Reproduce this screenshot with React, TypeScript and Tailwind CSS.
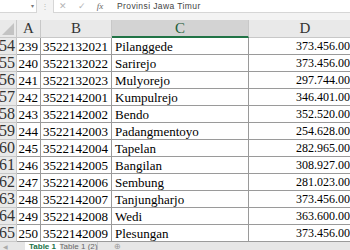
import React from 'react';

const rows = [
    ['54', '239', '3522132021', 'Pilanggede', '373.456.000'],
    ['55', '240', '3522132022', 'Sarirejo', '373.456.000'],
    ['56', '241', '3522132023', 'Mulyorejo', '297.744.000'],
    ['57', '242', '3522142001', 'Kumpulrejo', '346.401.000'],
    ['58', '243', '3522142002', 'Bendo', '352.520.000'],
    ['59', '244', '3522142003', 'Padangmentoyo', '254.628.000'],
    ['60', '245', '3522142004', 'Tapelan', '282.965.000'],
    ['61', '246', '3522142005', 'Bangilan', '308.927.000'],
    ['62', '247', '3522142006', 'Sembung', '281.023.000'],
    ['63', '248', '3522142007', 'Tanjungharjo', '373.456.000'],
    ['64', '249', '3522142008', 'Wedi', '363.600.000'],
    ['65', '250', '3522142009', 'Plesungan', '373.456.000'],
];

const serif = { fontFamily: '"Liberation Serif", "Times New Roman", serif' };

export default function App() {
    return (
        <div className="w-[350px] h-[250px] overflow-hidden bg-[#f3f3f3] flex flex-col" style={{ fontFamily: '"Liberation Sans", Arial, sans-serif' }}>
            {/* Formula bar */}
            <div className="h-[13px] flex items-stretch shrink-0">
                <div className="w-[37px] shrink-0 bg-white border-r border-b border-[#d6d6d6] flex items-center justify-end pr-[2px]">
                    <span className="text-[6px] text-[#777] leading-none">▾</span>
                </div>
                <div className="w-[16px] shrink-0 flex items-center justify-center text-[8px] text-[#bbb] leading-none">⋮</div>
                <div className="flex-1 bg-white border-l border-b border-[#d6d6d6] flex items-center">
                    <span className="w-[18px] text-center text-[9px] text-[#b5b5b5] leading-none">✕</span>
                    <span className="w-[20px] text-center text-[9px] text-[#b5b5b5] leading-none">✓</span>
                    <span className="w-[16px] text-center text-[9px] italic text-[#666] leading-none" style={serif}>fx</span>
                    <span className="ml-[9px] text-[8.5px] tracking-[0.4px] text-[#444] leading-none">Provinsi Jawa Timur</span>
                </div>
            </div>
            <div className="h-[7px] shrink-0" />

            {/* Column headers */}
            <div className="h-[18px] w-[361px] flex shrink-0 bg-[#e9e9e9] text-[15px] text-[#333] leading-none" style={serif}>
                <div className="w-[17px] shrink-0 border-r border-b border-[#c8c8c8] relative overflow-hidden">
                    <svg className="absolute right-[2px] bottom-[2px]" width="12" height="12" viewBox="0 0 12 12">
                        <polygon points="12,0 12,12 0,12" fill="#c3c3c3" />
                    </svg>
                </div>
                <div className="w-[24px] shrink-0 border-r border-b border-[#c8c8c8] flex items-center justify-center">A</div>
                <div className="w-[71px] shrink-0 border-r border-b border-[#c8c8c8] flex items-center justify-center">B</div>
                <div className="w-[137px] shrink-0 bg-[#d3d3d3] border-r border-[#c8c8c8] border-b-2 border-b-[#217346] flex items-center justify-center text-[#1e5e3a]">C</div>
                <div className="w-[112px] shrink-0 border-b border-[#c8c8c8] flex items-center justify-center">D</div>
            </div>

            {/* Rows */}
            <div className="flex flex-col w-[361px] bg-white shrink-0" style={serif}>
                {rows.map((r) => (
                    <div key={r[0]} className="h-[17px] w-[361px] flex text-[13px] text-black leading-none">
                        <div className="w-[17px] shrink-0 bg-[#e9e9e9] border-r border-b border-[#c8c8c8] flex items-center justify-end overflow-hidden text-[16px] text-[#333] pr-[1px]">
                            <span className="whitespace-nowrap">{r[0]}</span>
                        </div>
                        <div className="w-[24px] shrink-0 border-r border-b border-[#9a9a9a] flex items-center justify-end pr-[2px]">{r[1]}</div>
                        <div className="w-[71px] shrink-0 border-r border-b border-[#9a9a9a] flex items-center pl-[2px]">{r[2]}</div>
                        <div className="w-[137px] shrink-0 border-r border-b border-[#9a9a9a] flex items-center pl-[3px] whitespace-nowrap">{r[3]}</div>
                        <div className="w-[112px] shrink-0 border-b border-[#9a9a9a] flex items-center justify-end pr-[5px] text-[12px]">{r[4]}</div>
                    </div>
                ))}
            </div>

            {/* Sheet tabs */}
            <div className="flex-1 flex items-stretch bg-[#e6e6e6] text-[8px] leading-none whitespace-nowrap">
                <div className="w-[25px] flex items-center pl-[3px] text-[#aaa] text-[6px]">◀</div>
                <div className="w-[35px] bg-white flex items-start pt-[1px] justify-center font-bold text-[#217346]">Table 1</div>
                <div className="w-[38px] flex items-start pt-[1px] justify-center text-[#666] border-r border-[#c8c8c8]">Table 1 (2)</div>
                <div className="w-[38px] flex items-start pt-[1px] justify-center text-[#999]">⊕</div>
            </div>
        </div>
    );
}
